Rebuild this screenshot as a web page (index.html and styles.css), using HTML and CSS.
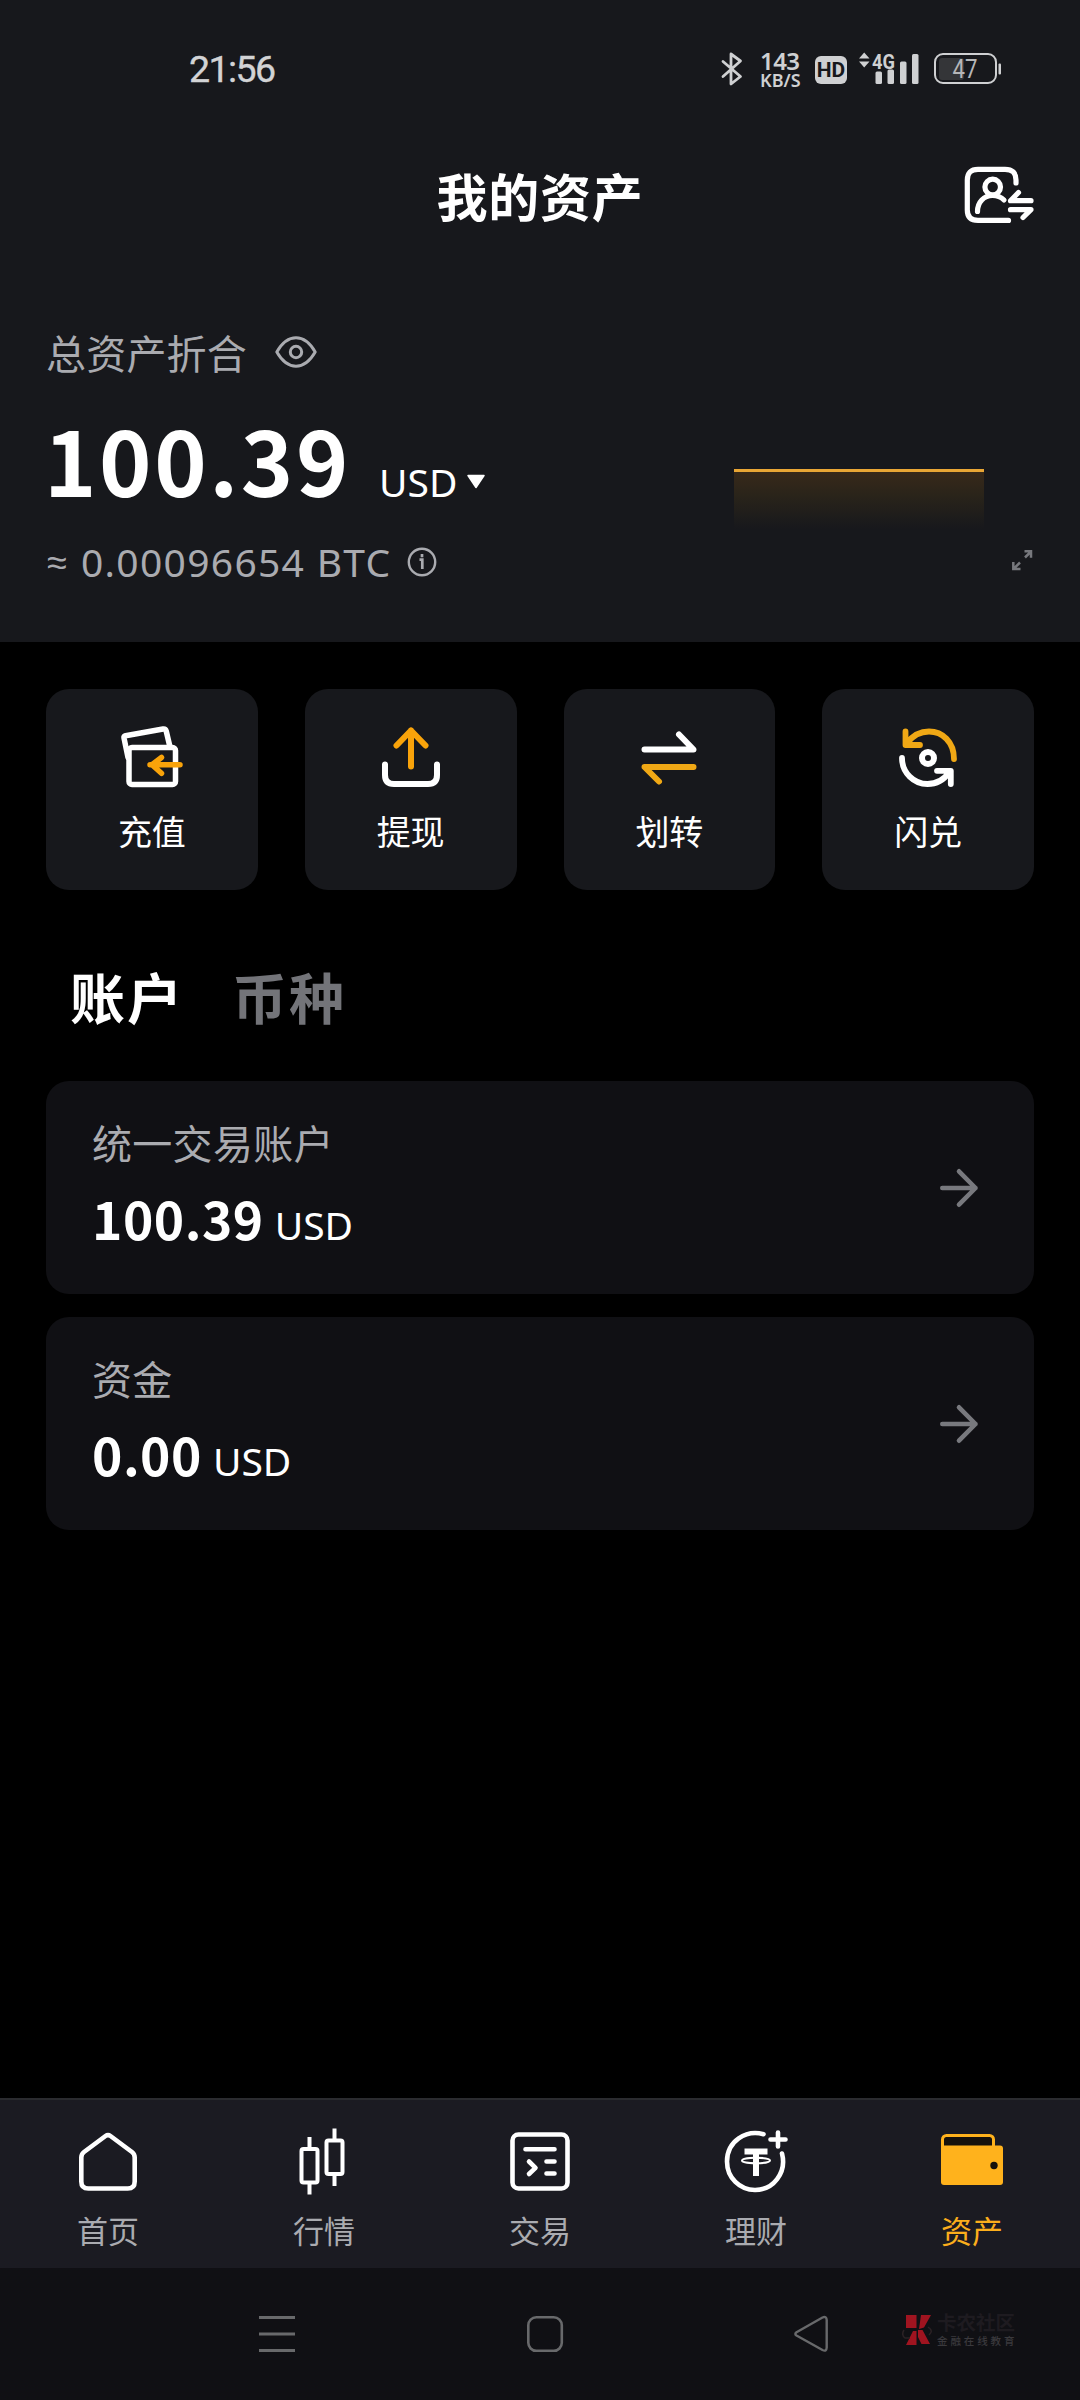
FILE: index.html
```html
<!DOCTYPE html>
<html lang="zh-CN">
<head>
<meta charset="utf-8">
<title>我的资产</title>
<link rel="stylesheet" href="styles.css">
</head>
<body>
<div class="screen">
  <section class="overview">
    <div class="status-bar">
      <span class="clock">21:56</span>
      <div class="status-icons">
        <svg class="bluetooth" width="22" height="36" viewBox="0 0 22 36" fill="none" stroke="#cfd0d2" stroke-width="2.8" stroke-linejoin="round" stroke-linecap="round"><path d="M2 10.500 19.500 25.500 10 33V3l9.500 7L2 25.500"/></svg>
        <div class="net-speed"><span class="speed">143</span><span class="unit">KB/S</span></div>
        <span class="hd">HD</span>
        <svg class="signal" width="62" height="36" viewBox="0 0 62 36" fill="#cfd0d2">
          <path d="M1 7.500 6.200 1.500 11.500 7.500zM1 10.500h10.500L6.200 16.500z"/>
          <text class="net-type" x="14" y="17.500" textLength="23" lengthAdjust="spacingAndGlyphs">4G</text>
          <rect x="17.500" y="20.500" width="6.500" height="12.500" rx="1.500"/><rect x="29.500" y="18.500" width="6.500" height="14.500" rx="1.500"/><rect x="42" y="10.500" width="6.500" height="22.500" rx="1.500"/><rect x="54" y="3" width="6.500" height="30" rx="1.500"/>
        </svg>
        <svg class="battery" width="68" height="32" viewBox="0 0 68 32">
          <rect x="5" y="5" width="25" height="22" rx="3" fill="#343538"/>
          <rect x="1" y="1" width="61" height="29" rx="8" fill="none" stroke="#cfd0d2" stroke-width="2"/>
          <rect x="64.500" y="10.500" width="2.500" height="11" rx="1" fill="#cfd0d2"/>
          <text class="charge" x="18.500" y="24.800" textLength="25" lengthAdjust="spacingAndGlyphs">47</text>
        </svg>
      </div>
    </div>
    <header class="title-bar">
      <h1 class="title">我的资产</h1>
      <svg class="account-switch" width="70" height="58" viewBox="0 0 70 58" fill="none" stroke="#fff" stroke-width="5.200" stroke-linecap="round" stroke-linejoin="round"><path d="M52 17V14Q52 3.300 41 3.300H14Q3.300 3.300 3.300 14V44Q3.300 54.400 14 54.400H44.500"/><circle cx="28.700" cy="21" r="7.800"/><path d="M13.500 45.500C13.500 36 20 29.500 28.500 29.500Q35.500 29.500 40 34"/><path d="M67 34.700H46.500L54.500 26.500M46.500 43.700H67L59 51.500"/></svg>
    </header>
    <div class="balance">
      <div class="balance-main">
        <div class="balance-label"><span>总资产折合</span>
          <svg width="42" height="34" viewBox="0 0 42 34" fill="none" stroke="#aaabb0" stroke-width="3"><path d="M1.800 17Q10 2.800 21 2.800T40.200 17Q32 31.200 21 31.200T1.800 17z" stroke-linejoin="round"/><circle cx="21" cy="17" r="5.700"/></svg>
        </div>
        <div class="balance-value"><span class="total">100.39</span><span class="currency">USD</span>
          <svg class="caret" width="20" height="16" viewBox="0 0 20 16"><path d="M2 1.500H18L10 13.500z" fill="#fff" stroke="#fff" stroke-width="1.500" stroke-linejoin="round"/></svg>
        </div>
        <div class="balance-btc"><span class="approx">≈</span><span class="btc">0.00096654 BTC</span>
          <svg width="30" height="30" viewBox="0 0 30 30" fill="none" stroke="#aaabb0" stroke-width="2.400"><circle cx="15" cy="15" r="13.200"/><path d="M12.500 12.600H15.300V22M15 7v3.200" stroke-width="2.700"/></svg>
        </div>
      </div>
      <div class="trend">
        <div class="sparkline"></div>
        <svg class="expand" width="22" height="22" viewBox="0 0 22 22" fill="none" stroke="#77787d" stroke-width="2.500"><path d="M14 8.500 20 2.500M13.500 2.200H20V8.800M9 13.500 3 19.500M2.300 13V20H9.500"/></svg>
      </div>
    </div>
  </section>

  <nav class="actions">
    <a class="action">
      <svg width="64" height="64" viewBox="0 0 64 64" fill="none" stroke="#fff" stroke-width="5.500" stroke-linecap="round" stroke-linejoin="round"><path d="M8 32.500 4 13Q3.500 11.200 5.500 10.700L43 4Q45.500 3.600 46.200 6L50 22"/><rect x="9" y="22.500" width="46.500" height="37" rx="3"/><path d="M30 39.800H60M41.500 32.500 32 39.800l9.500 8.500" stroke="#f9a30a"/><path d="M31 39.800l8-6v12z" fill="#f9a30a" stroke="none"/></svg>
      <span>充值</span>
    </a>
    <a class="action">
      <svg width="64" height="64" viewBox="0 0 64 64" fill="none" stroke="#fff" stroke-width="6" stroke-linecap="round" stroke-linejoin="round"><path d="M6 39.500V50Q6 59 15 59H49Q58 59 58 50V39.500"/><path d="M32 41.500V5.500M17.500 20.500 32 5.500 46.500 20.500" stroke="#f9a30a"/></svg>
      <span>提现</span>
    </a>
    <a class="action">
      <svg width="64" height="64" viewBox="0 0 64 64" fill="none" stroke="#fff" stroke-width="6" stroke-linecap="round" stroke-linejoin="round"><path d="M7.500 24.500H56.500L42 9.500"/><path d="M56.500 42H7.500L22 56.500" stroke="#f0a815"/></svg>
      <span>划转</span>
    </a>
    <a class="action">
      <svg width="64" height="64" viewBox="0 0 64 64" fill="none" stroke="#fff" stroke-width="5.800" stroke-linecap="round" stroke-linejoin="round"><path d="M58 34C58 17 46.500 6.500 33 6.500Q20 6.500 11 18M9.500 6.500V20H24" stroke="#f0a815"/><path d="M6 33C6 48 18 59 31.500 59Q45 59 53 47.500M41 45.800H54.800V59"/><circle cx="32" cy="33" r="6" stroke-width="6"/></svg>
      <span>闪兑</span>
    </a>
  </nav>

  <div class="tabs"><span class="tab tab-active">账户</span><span class="tab">币种</span></div>

  <main class="accounts">
    <article class="account">
      <div class="account-info">
        <div class="account-name">统一交易账户</div>
        <div class="account-value"><span class="amount">100.39</span><span class="currency">USD</span></div>
      </div>
      <svg width="42" height="42" viewBox="0 0 42 42" fill="none" stroke="#78797e" stroke-width="4.600" stroke-linecap="round" stroke-linejoin="round"><path d="M4.300 21H37.500M21 4.300 37.500 21 21 37.700"/></svg>
    </article>
    <article class="account">
      <div class="account-info">
        <div class="account-name">资金</div>
        <div class="account-value"><span class="amount">0.00</span><span class="currency">USD</span></div>
      </div>
      <svg width="42" height="42" viewBox="0 0 42 42" fill="none" stroke="#78797e" stroke-width="4.600" stroke-linecap="round" stroke-linejoin="round"><path d="M4.300 21H37.500M21 4.300 37.500 21 21 37.700"/></svg>
    </article>
  </main>

  <nav class="bottom-nav">
    <a class="nav-item">
      <svg width="72" height="72" viewBox="0 0 72 72" fill="none" stroke="#fff" stroke-width="4.600" stroke-linejoin="round"><path d="M9.300 30.500Q9.300 27 12 25L33.500 9Q36 7.200 38.500 9L60 25Q62.700 27 62.700 30.500V54.500Q62.700 61.500 55.700 61.500H16.300Q9.300 61.500 9.300 54.500z"/></svg>
      <span>首页</span>
    </a>
    <a class="nav-item">
      <svg width="72" height="72" viewBox="0 0 72 72" fill="none" stroke="#fff" stroke-width="4"><rect x="13.500" y="22" width="16" height="33.500" rx="2"/><rect x="38.500" y="13.500" width="16" height="33.500" rx="2"/><path d="M21.500 22V10M21.500 55.500V67.500M46.500 13.500V1.500M46.500 47V59"/></svg>
      <span>行情</span>
    </a>
    <a class="nav-item">
      <svg width="72" height="72" viewBox="0 0 72 72" fill="none" stroke="#fff" stroke-width="4.600" stroke-linecap="round" stroke-linejoin="round"><rect x="8.500" y="7.500" width="55" height="54" rx="6"/><path d="M21.500 22.300H50.500M42.500 34.500H50.500M42.500 46.500H50.500M25 34.500 31.500 40.800 25 47"/></svg>
      <span>交易</span>
    </a>
    <a class="nav-item">
      <svg width="72" height="72" viewBox="0 0 72 72" fill="none" stroke="#fff" stroke-width="4.600" stroke-linecap="round"><path d="M43.500 7.200C26 2.500 7 14 7 34.500C7 51 20 63 35 63C53 63 67 46 62 26.500M58 5.500V19.500M50.500 12.500H65.500"/><path d="M24.500 24.500H47.500M36 24.500V49" stroke-width="6" stroke-linecap="butt"/><ellipse cx="36" cy="33.500" rx="14" ry="2.800" stroke-width="2"/></svg>
      <span>理财</span>
    </a>
    <a class="nav-item nav-active">
      <svg width="72" height="72" viewBox="0 0 72 72"><rect x="6.500" y="8.500" width="51" height="30" rx="4" fill="#17120c" stroke="#ffb21c" stroke-width="3"/><path d="M5 18.500H64Q67 18.500 67 21.500V55Q67 58 64 58H8Q5 58 5 55z" fill="#ffb21c"/><circle cx="58" cy="38.500" r="3.700" fill="#17120c"/></svg>
      <span>资产</span>
    </a>
  </nav>

  <footer class="system-nav">
    <svg class="sys-menu" width="40" height="40" viewBox="0 0 40 40" stroke="#68696b" stroke-width="2.800"><path d="M2 3.500H38M2 20H38M2 36.500H38"/></svg>
    <svg class="sys-home" width="40" height="40" viewBox="0 0 40 40" fill="none" stroke="#68696b" stroke-width="2.600"><rect x="3.300" y="3.300" width="33.500" height="33.500" rx="8"/></svg>
    <svg class="sys-back" width="40" height="40" viewBox="0 0 40 40" fill="none" stroke="#68696b" stroke-width="2.400" stroke-linejoin="round"><path d="M4.500 18.200 30.500 3.500Q34.500 1.800 34.700 6V33.500Q34.500 38 30.500 36L4.500 21.500Q2.200 20 4.500 18.200z"/></svg>
    <div class="community">
      <svg width="32" height="34" viewBox="0 0 32 34"><path d="M4 2H14.500V15H4zM19 2H29L22 14.500 17 16zM4 32 11 18H14.500V32zM16 17H20.500L28 31H19.500L16 24z" fill="#a01420"/><path d="M2 17Q-1 22 3 25H8M26 14Q32 18 27 22" fill="none" stroke="#2b2225" stroke-width="1.500"/></svg>
      <div class="community-text"><span class="community-name">卡农社区</span><span class="community-tag">金融在线教育</span></div>
    </div>
  </footer>
</div>
</body>
</html>
```

FILE: styles.css
```css
* { box-sizing: border-box; }
body { margin: 0; background: #000; color: #fff; font-family: "Noto Sans CJK SC", sans-serif; }
svg { display: block; flex: none; }
.screen { width: 1080px; height: 2400px; display: flex; flex-direction: column; background: #000; overflow: hidden; }

.overview { height: 642px; background: #17181c; display: flex; flex-direction: column; }
.status-bar { height: 138px; padding: 0 78px 0 189px; display: flex; justify-content: space-between; align-items: center; }
.clock { font: 400 37.5px/50px Roboto, sans-serif; letter-spacing: -1.6px; color: #d2d3d5; -webkit-text-stroke: .4px #d2d3d5; }
.status-icons { display: flex; align-items: center; color: #cfd0d2; }
.net-speed { margin-left: 17px; width: 45px; display: flex; flex-direction: column; gap: 1px; padding-top: 2px; }
.speed { font: 600 24px/20px "Noto Sans", sans-serif; letter-spacing: -.6px; }
.unit { font: 600 18px/17px "Noto Sans", sans-serif; letter-spacing: 0; }
.hd { margin: 2px 11px 0 10px; width: 32px; height: 28px; border-radius: 6px; background: #cfd0d2; color: #17181c; font: 700 21px/28px Roboto, sans-serif; text-align: center; }
.signal { overflow: visible; }
.net-type { font: 700 21px Roboto, sans-serif; }
.battery { margin-left: 14px; }
.charge { font: 400 25px Roboto, sans-serif; fill: #b5b6b8; }

.title-bar { height: 114px; padding: 0 46px 0 116px; display: flex; align-items: center; }
.title { margin: 0; flex: 1; text-align: center; font-size: 51px; line-height: 70px; font-weight: 700; letter-spacing: .7px; }

.balance { flex: 1; padding: 72px 46px 0; display: flex; justify-content: space-between; }
.balance-label { height: 56px; display: flex; align-items: center; gap: 28px; font-size: 40px; line-height: 56px; letter-spacing: .2px; color: #aaabb0; }
.balance-value { height: 117px; margin-top: 20px; display: flex; align-items: baseline; line-height: 117px; }
.total { font-size: 89px; font-weight: 700; letter-spacing: 2.6px; margin-left: -2px; }
.currency { font-family: "Noto Sans", sans-serif; font-size: 39px; letter-spacing: 0; }
.balance-value .currency { margin-left: 28px; }
.caret { margin: 0 0 9px 9px; position: relative; top: -7px; }
.balance-btc { height: 60px; margin-top: 15px; display: flex; align-items: center; font: 400 39px/60px "Noto Sans", sans-serif; color: #aaabb0; }
.approx { width: 34px; font-size: 36px; margin-left: 1px; }
.btc { letter-spacing: 1.3px; }
.balance-btc svg { margin-left: 16px; }
.trend { width: 300px; display: flex; flex-direction: column; padding-top: 145px; }
.sparkline { width: 250px; height: 60px; border-top: 3px solid #e9a635; background: linear-gradient(#38291a, #2a241a 40%, #17181c); }
.expand { align-self: flex-end; margin: 20px 1px 0 0; }

.actions { margin-top: 47px; padding: 0 46px; display: grid; grid-template-columns: repeat(4, 1fr); gap: 47px; }
.action { height: 201px; padding-top: 36px; border-radius: 23px; background: #17181c; display: flex; flex-direction: column; align-items: center; font-size: 34px; line-height: 48px; gap: 18px; }

.tabs { height: 191px; padding: 67px 70px 0; display: flex; gap: 48px; font-size: 55px; font-weight: 700; line-height: 76px; letter-spacing: 2px; }
.tab { color: #737479; }
.tab-active { color: #fff; }

.accounts { flex: 1; padding: 0 46px; display: flex; flex-direction: column; gap: 23px; }
.account { height: 213px; padding: 0 54px 0 46px; border-radius: 23px; background: #101014; display: flex; justify-content: space-between; align-items: center; }
.account-info { height: 213px; padding-top: 33px; }
.account-name { font-size: 40px; line-height: 56px; letter-spacing: .3px; color: #aaabb0; }
.account-value { margin-top: 8px; height: 80px; line-height: 80px; display: flex; align-items: baseline; gap: 11px; }
.amount { font-size: 51.5px; font-weight: 700; letter-spacing: .5px; }

.bottom-nav { height: 170px; border-top: 2px solid #2a2b2f; background: #1b1b22; display: grid; grid-template-columns: repeat(5, 1fr); }
.nav-item { padding-top: 27px; display: flex; flex-direction: column; align-items: center; font-size: 31px; line-height: 44px; gap: 9px; color: #aaabb0; }
.nav-active { color: #fbae1c; }

.system-nav { height: 132px; padding: 0 60px 0 257px; background: #101014; display: flex; align-items: center; }
.sys-home { margin-left: 228px; }
.sys-back { margin-left: 227px; }
.community { margin: -9px 0 0 70px; display: flex; gap: 3px; align-items: center; }
.community-text { display: flex; flex-direction: column; }
.community-name { font-size: 19.500px; line-height: 22px; font-weight: 700; color: #1e1b20; }
.community-tag { font-size: 10.500px; line-height: 16px; letter-spacing: 2.900px; font-weight: 500; color: #3a393d; white-space: nowrap; }
```
